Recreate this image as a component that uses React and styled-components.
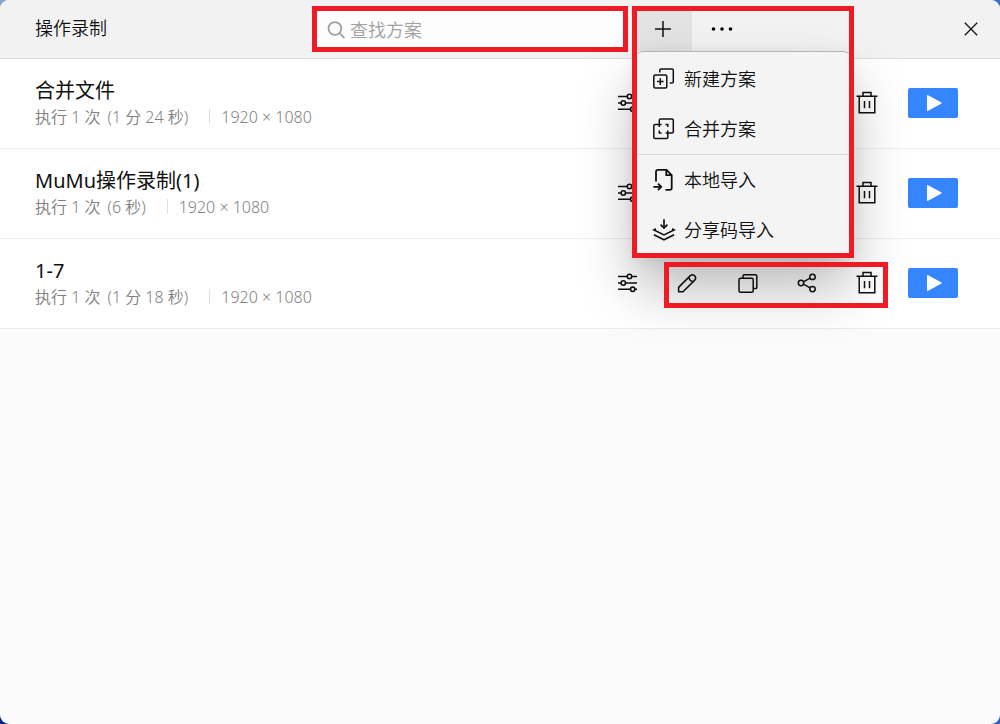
import React from "react";
import styled, { createGlobalStyle } from "styled-components";

const RED = "#ee1b24";

const Global = createGlobalStyle`
  *, *::before, *::after { box-sizing: border-box; }
  html, body, #root { height: 100%; }
  body {
    margin: 0;
    background:
      linear-gradient(90deg, #86a5cc, #2f74d6) top / 100% 50% no-repeat,
      linear-gradient(90deg, #00208c, #2c62c4) bottom / 100% 50% no-repeat;
    font-family: "Noto Sans", "Noto Sans CJK SC", sans-serif;
    font-weight: 350;
    color: #111;
  }
  button, input { font: inherit; color: inherit; }
`;

const Window = styled.main`
  min-height: 100%;
  border-radius: 9px;
  overflow: hidden;
  background: #fbfbfb;
`;

const Header = styled.header`
  display: flex;
  align-items: flex-start;
  height: 59px;
  padding: 6px 0 0 35px;
  background: #f2f2f2;
  border-bottom: 1px solid #dcdcdc;
`;

const Title = styled.h1`
  flex: 1;
  margin: 0;
  font-size: 18px;
  line-height: 44px;
  font-weight: inherit;
`;

const Search = styled.label`
  display: flex;
  align-items: center;
  gap: 4px;
  width: 316px;
  height: 46px;
  padding: 2px 9px 0;
  border: 5px solid ${RED};
  background: #fdfdfd;
  color: #a0a0a0;
`;

const SearchInput = styled.input`
  flex: 1;
  min-width: 0;
  height: 32px;
  padding: 0;
  border: 0;
  outline: 0;
  background: transparent;
  font-size: 18px;
  color: #333;
  &::placeholder { color: #a0a0a0; opacity: 1; }
`;

const Tools = styled.div`
  position: relative;
  display: flex;
  width: 222px;
  height: 46px;
  margin-left: 4px;
  padding: 5px 5px 0;
`;

const ToolButton = styled.button`
  display: flex;
  align-items: center;
  justify-content: center;
  width: ${(p) => (p.$active ? 55 : 60)}px;
  height: 40px;
  padding: 0 ${(p) => (p.$active ? 4 : 0)}px 4px 0;
  border: 0;
  background: ${(p) => (p.$active ? "#e3e3e3" : "transparent")};
`;

const CloseArea = styled.div`
  display: flex;
  justify-content: flex-end;
  width: 146px;
  padding: 7px 13px 0 0;
`;

const IconButton = styled.button`
  display: flex;
  align-items: center;
  justify-content: center;
  width: 32px;
  height: 32px;
  padding: 0;
  border: 0;
  background: transparent;
`;

const Menu = styled.ul`
  position: absolute;
  z-index: 2;
  top: 45px;
  left: 3px;
  right: 3px;
  height: 205px;
  margin: 0;
  padding: 2px 0 0;
  list-style: none;
  background: #f4f4f4;
  border-top: 1px solid #b4b4b4;
  border-radius: 8px;
  box-shadow: 0 32px 56px rgba(0, 0, 0, 0.28), 0 4px 16px rgba(0, 0, 0, 0.08);
`;

const MenuItem = styled.li`
  height: ${(p) => (p.$divided ? 51 : 50)}px;
  border-top: ${(p) => (p.$divided ? "1px solid #d8d8d8" : "0")};
`;

const MenuButton = styled.button`
  display: flex;
  align-items: center;
  gap: 8px;
  width: 100%;
  height: 50px;
  padding: 0 17px;
  border: 0;
  background: transparent;
  font-size: 18px;
  line-height: 24px;
`;

const Highlight = styled.div`
  position: absolute;
  z-index: 3;
  inset: 0 0 ${(p) => p.$extend || 0}px;
  border: 5px solid ${RED};
  pointer-events: none;
`;

const List = styled.ul`
  margin: 0;
  padding: 0;
  list-style: none;
`;

const Row = styled.li`
  display: flex;
  align-items: center;
  justify-content: space-between;
  height: 90px;
  padding: 0 42px 2px 35px;
  background: #fff;
  border-bottom: 1px solid #ededed;
`;

const Name = styled.h2`
  margin: 0;
  font-size: 20px;
  line-height: 28px;
  font-weight: 400;
`;

const Meta = styled.div`
  display: flex;
  align-items: center;
  font-size: 16px;
  line-height: 24px;
  color: #808080;
`;

const Duration = styled.span`
  margin-left: 7px;
`;

const Resolution = styled.span`
  display: flex;
  align-items: center;
  margin-left: 21px;
  &::before {
    content: "";
    width: 1px;
    height: 15px;
    margin-right: 11px;
    background: #dedede;
  }
`;

const Actions = styled.div`
  display: flex;
  align-items: center;
  gap: 25px;
`;

const IconRow = styled.div`
  display: flex;
  gap: 28px;
`;

const EditGroup = styled.div`
  position: relative;
  display: flex;
  align-items: center;
  gap: 28px;
  height: 46px;
  margin: -5px -5px -9px -7px;
  padding: 0 5px 4px 7px;
`;

const Play = styled.button`
  display: flex;
  align-items: center;
  justify-content: center;
  width: 50px;
  height: 30px;
  padding: 0 0 0 2px;
  border: 0;
  border-radius: 2px;
  background: #3585ff;
`;

const Svg = ({ size = 24, children, w = 1.5 }) => (
  <svg width={size} height={size} viewBox={`0 0 ${size} ${size}`} fill="none" stroke="currentColor" strokeWidth={w} aria-hidden="true">
    {children}
  </svg>
);

const SearchIcon = () => (
  <Svg size={20} w={1.8}>
    <circle cx="8.9" cy="8.5" r="6.4" />
    <path d="M13.6 13.2L18.4 18" />
  </Svg>
);
const PlusIcon = () => <Svg w={1.5}><path d="M12 4v16M4 12h16" /></Svg>;
const DotsIcon = () => (
  <svg width="24" height="24" viewBox="0 0 24 24" aria-hidden="true">
    <circle cx="3.5" cy="12" r="1.8" /><circle cx="12" cy="12" r="1.8" /><circle cx="20.5" cy="12" r="1.8" />
  </svg>
);
const CloseIcon = () => <Svg w={1.3}><path d="M5.8 5.8l12.4 12.4M18.2 5.8L5.8 18.2" /></Svg>;
const NewIcon = () => (
  <Svg>
    <rect x="1.8" y="8" width="13" height="13" rx="1.5" />
    <path d="M8.3 11.3v6.6M5 14.6h6.6M7.8 5.5V3.2q0-1.2 1.2-1.2h11q1.3 0 1.3 1.3v11.4q0 1.3-1.3 1.3h-2.2" />
  </Svg>
);
const MergeIcon = () => (
  <Svg>
    <path d="M7.3 10V3.3Q7.3 2 8.6 2h11.4q1.3 0 1.3 1.3v11.4q0 1.3-1.3 1.3h-6.4M9.6 16H7.3v-2.4M9.6 7.5H3.1q-1.3 0-1.3 1.3v11.4q0 1.3 1.3 1.3h11.4q1.3 0 1.3-1.3v-6.6M15.8 10V7.5h-2.4" />
  </Svg>
);
const ImportIcon = () => (
  <Svg w={1.8}>
    <path d="M4 13.5V3.7Q4 1.8 5.9 1.8h8.6l5.2 5.2v13q0 1.8-1.8 1.8h-4.4M14.3 2v5.2h5.2M1.3 18.8h7.4M6 15.6l3.2 3.2L6 22" />
  </Svg>
);
const ShareImportIcon = () => (
  <Svg w={1.7}>
    <path d="M12 1.2v8.6M8.6 6.7L12 10l3.4-3.3M3.9 10.7l-2 1.2L12 16.9l10.1-5-2-1.2M1.9 16.7l10.1 5 10.1-5" />
  </Svg>
);
const SlidersIcon = () => (
  <Svg w={1.6}>
    <path d="M3 5.5h9.2M16.8 5.5H22M3 12h3M10.6 12H22M3 18.3h12.4M20 18.3h2" />
    <circle cx="14.5" cy="5.5" r="2.2" /><circle cx="8.3" cy="12" r="2.2" /><circle cx="17.7" cy="18.3" r="2.2" />
  </Svg>
);
const EditIcon = () => (
  <Svg><path d="M3.6 20.8v-4.4L15.3 4.6q2.2-1.8 4.3.2 2 2.1.2 4.3L8 20.8zM14 6q.2 4.2 4.4 4.4" strokeLinejoin="round" /></Svg>
);
const CopyIcon = () => (
  <Svg><rect x="4" y="7.3" width="14.2" height="13.9" rx="1.5" /><path d="M8 7.2V5q0-1.2 1.2-1.2h11.3q1.3 0 1.3 1.3v11.3q0 1.2-1.2 1.2h-2.3" /></Svg>
);
const ShareIcon = () => (
  <Svg><circle cx="6" cy="12" r="2.7" /><circle cx="17.5" cy="5.9" r="2.7" /><circle cx="17.5" cy="18.1" r="2.7" /><path d="M8.4 10.8l6.7-3.7M8.4 13.2l6.7 3.7" /></Svg>
);
const TrashIcon = () => (
  <Svg><path d="M1.5 5.3h21M8 5V1.6h8V5M4.2 5.3v16.4h15.6V5.3M9.5 10v7.3M14.5 10v7.3" /></Svg>
);
const PlayIcon = () => (
  <svg width="16" height="16" viewBox="0 0 16 16" fill="#fff" aria-hidden="true"><path d="M1 .9q0-1.4 1.2-.7l12.9 7.1q1.1.7 0 1.4L2.2 15.8Q1 16.5 1 15.1z" /></svg>
);

const menuItems = [
  { label: "新建方案", Icon: NewIcon },
  { label: "合并方案", Icon: MergeIcon },
  { label: "本地导入", Icon: ImportIcon, divided: true },
  { label: "分享码导入", Icon: ShareImportIcon },
];

const records = [
  { name: "合并文件", duration: "(1 分 24 秒)" },
  { name: "MuMu操作录制(1)", duration: "(6 秒)" },
  { name: "1-7", duration: "(1 分 18 秒)", highlighted: true },
];

export default function App() {
  return (
    <>
      <Global />
      <Window>
        <Header>
          <Title>操作录制</Title>
          <Search>
            <SearchIcon />
            <SearchInput type="text" placeholder="查找方案" aria-label="查找方案" />
          </Search>
          <Tools>
            <ToolButton $active aria-label="添加" aria-expanded="true"><PlusIcon /></ToolButton>
            <ToolButton aria-label="更多"><DotsIcon /></ToolButton>
            <Menu>
              {menuItems.map(({ label, Icon, divided }) => (
                <MenuItem key={label} $divided={divided}>
                  <MenuButton><Icon />{label}</MenuButton>
                </MenuItem>
              ))}
            </Menu>
            <Highlight $extend={-206} />
          </Tools>
          <CloseArea>
            <IconButton aria-label="关闭"><CloseIcon /></IconButton>
          </CloseArea>
        </Header>
        <List>
          {records.map((r) => (
            <Row key={r.name}>
              <div>
                <Name>{r.name}</Name>
                <Meta>
                  <span>执行 1 次</span>
                  <Duration>{r.duration}</Duration>
                  <Resolution>1920 × 1080</Resolution>
                </Meta>
              </div>
              <Actions>
                <IconRow>
                  <IconButton aria-label="设置"><SlidersIcon /></IconButton>
                  <EditGroup>
                    <IconButton aria-label="编辑"><EditIcon /></IconButton>
                    <IconButton aria-label="复制"><CopyIcon /></IconButton>
                    <IconButton aria-label="分享"><ShareIcon /></IconButton>
                    <IconButton aria-label="删除"><TrashIcon /></IconButton>
                    {r.highlighted && <Highlight />}
                  </EditGroup>
                </IconRow>
                <Play aria-label="运行"><PlayIcon /></Play>
              </Actions>
            </Row>
          ))}
        </List>
      </Window>
    </>
  );
}
